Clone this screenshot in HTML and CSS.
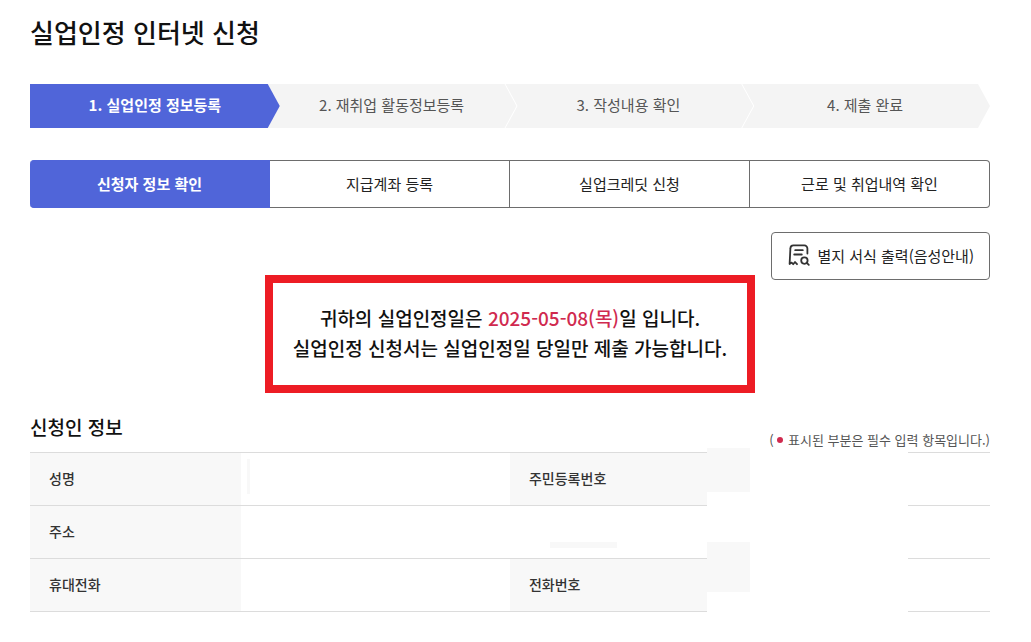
FILE: index.html
```
<!DOCTYPE html>
<html lang="ko">
<head>
    <meta charset="UTF-8">
    <meta name="viewport" content="width=device-width, initial-scale=1.0">
    <title>실업인정 인터넷 신청</title>
    <link rel="stylesheet" href="styles.css">
</head>
<body>
    <main class="page">
        <h1 class="page-title">실업인정 인터넷 신청</h1>

        <!-- Progress steps -->
        <ol class="steps">
            <li class="step active" aria-current="step">1. 실업인정 정보등록</li>
            <li class="step">2. 재취업 활동정보등록</li>
            <li class="step">3. 작성내용 확인</li>
            <li class="step">4. 제출 완료</li>
        </ol>

        <!-- Tabs -->
        <nav class="tabs">
            <a href="#" class="tab active">신청자 정보 확인</a>
            <a href="#" class="tab">지급계좌 등록</a>
            <a href="#" class="tab">실업크레딧 신청</a>
            <a href="#" class="tab">근로 및 취업내역 확인</a>
        </nav>

        <div class="actions">
            <button type="button" class="print-button">
                <svg class="print-icon" viewBox="0 0 24 24" width="24" height="24" fill="none" stroke="#333" stroke-width="1.8" stroke-linecap="round" stroke-linejoin="round" aria-hidden="true">
                    <path d="M20.4 10.5V5.4a3 3 0 0 0-3-3H6.4a3 3 0 0 0-3 3L2.6 21l2-1.4 1.6 1.6 1.8-2.2 2 2.2"/>
                    <path d="M8.2 7.2h7.6M7.2 11.5h7.6"/>
                    <circle cx="17.4" cy="17.6" r="3.2"/>
                    <path d="M19.8 19.8l2 2"/>
                </svg>
                별지 서식 출력(음성안내)
            </button>
        </div>

        <!-- Notice -->
        <div class="notice">
            <p>귀하의 실업인정일은 <span class="date">2025-05-08(목)</span>일 입니다.</p>
            <p>실업인정 신청서는 실업인정일 당일만 제출 가능합니다.</p>
        </div>

        <!-- Applicant information -->
        <div class="section-head">
            <h2>신청인 정보</h2>
            <p class="required-note">( <span class="dot"></span> 표시된 부분은 필수 입력 항목입니다.)</p>
        </div>
        <table class="info-table" aria-label="신청인 정보">
            <colgroup>
                <col class="col-label">
                <col class="col-value">
                <col class="col-label-2">
                <col class="col-hidden">
                <col class="col-end">
            </colgroup>
            <tbody>
                <tr>
                    <th scope="row">성명</th>
                    <td><span class="patch patch-name"></span></td>
                    <th scope="row">주민등록번호</th>
                    <td class="hidden-cell"><span class="patch patch-id"></span></td>
                    <td></td>
                </tr>
                <tr>
                    <th scope="row">주소</th>
                    <td></td>
                    <td><span class="patch patch-address"></span></td>
                    <td class="hidden-cell"><span class="patch patch-phone"></span></td>
                    <td></td>
                </tr>
                <tr>
                    <th scope="row">휴대전화</th>
                    <td></td>
                    <th scope="row">전화번호</th>
                    <td class="hidden-cell"></td>
                    <td></td>
                </tr>
            </tbody>
        </table>
    </main>
</body>
</html>
```
FILE: styles.css
```
* {
    box-sizing: border-box;
}
body {
    margin: 0;
    background-color: #fff;
    color: #333;
    font-family: "Noto Sans CJK KR", sans-serif;
    font-size: 15px;
}
h1, h2, p, ol {
    margin: 0;
    padding: 0;
}
.page {
    padding: 12px 41px 30px 30px;
}
.page-title {
    color: #111;
    font-size: 26px;
    font-weight: 500;
    line-height: 40px;
}

/* Progress steps */
.steps {
    display: flex;
    margin-top: 32px;
    list-style: none;
}
.step {
    flex: 1 1 0;
    margin-left: -13px;
    padding-bottom: 2px;
    background-color: #f4f4f4;
    color: #555;
    line-height: 42px;
    text-align: center;
    clip-path: polygon(2px 0, calc(100% - 12px) 0, 100% 50%, calc(100% - 12px) 100%, 2px 100%, 14px 50%);
}
.step.active {
    position: relative;
    z-index: 1;
    margin-left: 0;
    background-color: #5065d9;
    color: #fff;
    font-weight: 700;
    clip-path: polygon(0 0, calc(100% - 12px) 0, 100% 50%, calc(100% - 12px) 100%, 0 100%);
}
.step.active + .step {
    clip-path: polygon(0 0, calc(100% - 12px) 0, 100% 50%, calc(100% - 12px) 100%, 0 100%);
}

/* Tabs */
.tabs {
    display: flex;
    margin-top: 32px;
}
.tab {
    flex: 1 1 0;
    border: 1px solid #6d6d6d;
    border-left: none;
    color: #222;
    line-height: 46px;
    text-align: center;
    text-decoration: none;
}
.tab.active {
    border-color: #5065d9;
    border-radius: 4px 0 0 4px;
    background-color: #5065d9;
    color: #fff;
    font-weight: 700;
}
.tab:last-child {
    border-radius: 0 4px 4px 0;
}

.actions {
    display: flex;
    justify-content: flex-end;
    margin-top: 24px;
}
.print-button {
    display: flex;
    align-items: center;
    gap: 6px;
    height: 48px;
    padding: 0 15px 2px;
    border: 1px solid #6d6d6d;
    border-radius: 4px;
    background-color: #fff;
    color: #222;
    font-family: inherit;
    font-size: 15px;
    cursor: pointer;
}

/* Notice */
.notice {
    width: fit-content;
    margin: -5px auto 0;
    padding: 20px 20px 22px;
    border: 8px solid #ed1c24;
    color: #111;
    font-size: 19px;
    font-weight: 500;
    line-height: 30px;
    text-align: center;
}
.notice .date {
    color: #d02a4f;
}

/* Applicant information */
.section-head {
    display: flex;
    align-items: flex-end;
    justify-content: space-between;
    margin-top: 20px;
}
.section-head h2 {
    padding-bottom: 12px;
    color: #111;
    font-size: 19px;
    font-weight: 500;
    line-height: 27px;
}
.required-note {
    color: #555;
    font-size: 13px;
    line-height: 24px;
}
.dot {
    display: inline-block;
    width: 6px;
    height: 6px;
    margin-right: 1px;
    border-radius: 50%;
    background-color: #d02a4f;
    vertical-align: 2px;
}
.info-table {
    width: 100%;
    border-collapse: separate;
    border-spacing: 0;
    table-layout: fixed;
    font-size: 14px;
}
.col-label {
    width: 22%;
}
.col-value {
    width: 28%;
}
.col-label-2 {
    width: 20.5%;
}
.col-hidden {
    width: 21%;
}
.col-end {
    width: 8.5%;
}
.info-table th,
.info-table td {
    position: relative;
    height: 53px;
    padding: 0 19px 2px;
    border-top: 1px solid #dcdcdc;
    text-align: left;
}
.info-table th {
    background-color: #f8f8f8;
    font-weight: 500;
}
.info-table tr:last-child th,
.info-table tr:last-child td {
    height: 54px;
    border-bottom: 1px solid #dcdcdc;
}
.info-table tr .hidden-cell,
.info-table tr:last-child .hidden-cell {
    border-color: transparent;
}

/* Light blocks left over the blanked values */
.patch {
    position: absolute;
    z-index: 1;
    background-color: #f8f8f8;
}
.patch-name {
    top: 6px;
    left: 6px;
    width: 3px;
    height: 35px;
}
.patch-id {
    top: -5px;
    left: 0;
    width: 43px;
    height: 44px;
}
.patch-address {
    top: 36px;
    left: 40px;
    width: 67px;
    height: 6px;
}
.patch-phone {
    top: 36px;
    left: 0;
    width: 43px;
    height: 50px;
}
```
